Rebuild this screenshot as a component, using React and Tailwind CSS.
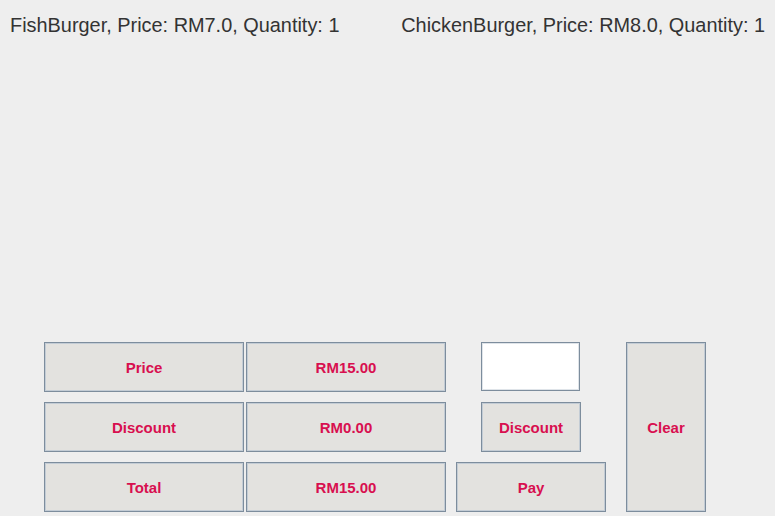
const items = [
    { name: "FishBurger", price: "RM7.0", qty: 1 },
    { name: "ChickenBurger", price: "RM8.0", qty: 1 },
];

const Btn = ({ children, className = "" }) => (
    <button
        className={`border border-[#7d8d9d] shadow-[inset_0_0_0_1px_#c3ccd5] bg-[#e3e2df] text-[#d80f4f] font-bold text-[15px] pt-[2px] flex items-center justify-center ${className}`}
    >
        {children}
    </button>
);

export default function App() {
    return (
        <div className="w-[775px] h-[516px] bg-[#eeeeee] flex flex-col font-['Liberation_Sans',Arial,sans-serif] overflow-hidden">
            {/* order lines */}
            <div className="flex justify-between px-[10px] pt-[15px] text-[19.9px] leading-[20px] text-[#333333]">
                {items.map((it) => (
                    <span key={it.name}>
                        {it.name}, Price: {it.price}, Quantity: {it.qty}
                    </span>
                ))}
            </div>

            <div className="flex-1" />

            {/* summary + actions */}
            <div className="flex pl-[44px] pb-[4px]">
                <div className="grid grid-cols-[200px_200px] auto-rows-[50px] gap-x-[2px] gap-y-[10px]">
                    <Btn>Price</Btn>
                    <Btn>RM15.00</Btn>
                    <Btn>Discount</Btn>
                    <Btn>RM0.00</Btn>
                    <Btn>Total</Btn>
                    <Btn>RM15.00</Btn>
                </div>

                <div className="ml-[10px] w-[150px] flex flex-col items-start gap-y-[10px]">
                    <input
                        type="text"
                        className="ml-[25px] w-[99px] h-[49px] mb-[1px] bg-white border border-[#7d8d9d] shadow-[inset_0_0_0_1px_#dfe4e9] outline-none"
                    />
                    <Btn className="ml-[25px] w-[100px] h-[50px]">Discount</Btn>
                    <Btn className="w-[150px] h-[50px]">Pay</Btn>
                </div>

                <Btn className="ml-[20px] w-[80px] h-[170px]">Clear</Btn>
            </div>
        </div>
    );
}
